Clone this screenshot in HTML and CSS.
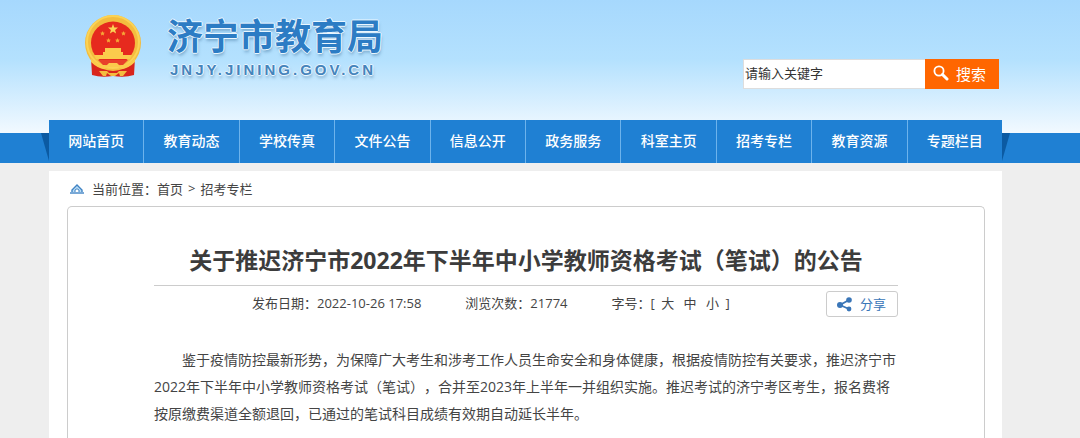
FILE: index.html
```html
<!DOCTYPE html>
<html lang="zh-CN">
<head>
    <meta charset="UTF-8">
    <meta name="viewport" content="width=device-width, initial-scale=1.0">
    <title>济宁市教育局</title>
    <link rel="stylesheet" href="styles.css">
</head>
<body>

    <header class="header">
        <div class="container header-inner">
            <a class="logo" href="#">
                <svg class="emblem" viewBox="0 0 58 62" aria-hidden="true">
                    <path d="M7 43 L8 60 Q17 63 29 61 Q41 63 50 60 L51 43 Z" fill="#d9251c"/>
                    <ellipse cx="29" cy="28" rx="28" ry="28" fill="#f3bd3f"/>
                    <circle cx="29" cy="27" r="26" fill="none" stroke="#fbd355" stroke-width="2"/>
                    <ellipse cx="29" cy="28" rx="22" ry="21.5" fill="#e62a1e"/>
                    <path d="M29 9 l1.3 3.5 3.7.1 -2.9 2.3 1 3.6 -3.1-2.1 -3.1 2.1 1-3.6 -2.9-2.3 3.7-.1z" fill="#fbd355"/>
                    <g fill="#f6a637">
                        <path id="star" d="M18.5 16 l.7 1.5 1.7.2 -1.2 1.1 .3 1.7 -1.5-.8 -1.5.8 .3-1.7 -1.2-1.1 1.7-.2z"/>
                        <use href="#star" x="21"/>
                        <use href="#star" x="6" y="7"/>
                        <use href="#star" x="15" y="7"/>
                    </g>
                    <path d="M21 33 h16 v4 h2 v3 h9 l-2 4 H12 l-2-4 h9 v-3 h2z" fill="#fbcb4c"/>
                    <path d="M14 45 h30 l-5 5 H19z" fill="#e8402a"/>
                    <path d="M7 43 Q12 49 22 51 L25 48 h8 l3 3 Q46 49 51 43 L51 47 Q45 53 38 54 L33 52 h-8 L20 54 Q13 53 7 47z" fill="#fbcb4c"/>
                    <path d="M15 56 h8 l2 2 h8 l2-2 h8 l-4 5 h-3 l-1-3 -4 3 h-4 l-4-3 -1 3 h-3z" fill="#f3bd3f"/>
                </svg>
                <span class="logo-text">
                    <span class="logo-name">济宁市教育局</span>
                    <span class="logo-domain">JNJY.JINING.GOV.CN</span>
                </span>
            </a>
            <form class="search">
                <input class="search-input" type="text" placeholder="请输入关键字" aria-label="请输入关键字">
                <button class="search-button" type="submit">
                    <svg class="search-icon" viewBox="0 0 16 16" aria-hidden="true">
                        <circle cx="6" cy="6" r="4.6" fill="none" stroke="#fff" stroke-width="1.8"/>
                        <path d="M9.5 9.5 L14 14" stroke="#fff" stroke-width="3" stroke-linecap="round"/>
                    </svg>
                    搜索
                </button>
            </form>
        </div>
    </header>

    <div class="nav-bar">
        <nav class="container nav">
            <a href="#">网站首页</a>
            <a href="#">教育动态</a>
            <a href="#">学校传真</a>
            <a href="#">文件公告</a>
            <a href="#">信息公开</a>
            <a href="#">政务服务</a>
            <a href="#">科室主页</a>
            <a href="#">招考专栏</a>
            <a href="#">教育资源</a>
            <a href="#">专题栏目</a>
        </nav>
    </div>

    <main class="container main">
        <div class="breadcrumb">
            <svg class="home-icon" viewBox="0 0 14 10" aria-hidden="true">
                <path d="M2 8 V6 L7 1 L12 6 V8" fill="#b9dcf5" stroke="#3f83c4" stroke-width="1.4"/>
                <path d="M5 8 V6 Q7 3.5 9 6 V8" fill="#fff" stroke="#3f83c4"/>
                <path d="M0 9 H14" stroke="#3f83c4" stroke-width="1.4"/>
            </svg>
            <div class="crumbs">
                <span>当前位置：<a href="#">首页</a></span>
                <span>&gt;</span>
                <a href="#">招考专栏</a>
            </div>
        </div>

        <article class="article">
            <h1>关于推迟济宁市2022年下半年中小学教师资格考试（笔试）的公告</h1>
            <div class="meta">
                <div class="meta-info">
                    <span>发布日期：2022-10-26 17:58</span>
                    <span>浏览次数：21774</span>
                    <span class="font-size">字号：[ <a href="#">大</a> <a href="#">中</a> <a href="#">小</a> ]</span>
                </div>
                <button class="share" type="button">
                    <svg class="share-icon" viewBox="0 0 15 15" aria-hidden="true">
                        <path d="M12 3 L3 8 L12 12" fill="none" stroke="#3a76b8" stroke-width="1.8"/>
                        <circle cx="12" cy="3" r="2.8" fill="#3a76b8"/>
                        <circle cx="3" cy="8" r="3" fill="#3a76b8"/>
                        <circle cx="12" cy="12" r="2.4" fill="#3a76b8"/>
                    </svg>
                    分享
                </button>
            </div>
            <p>鉴于疫情防控最新形势，为保障广大考生和涉考工作人员生命安全和身体健康，根据疫情防控有关要求，推迟济宁市2022年下半年中小学教师资格考试（笔试），合并至2023年上半年一并组织实施。推迟考试的济宁考区考生，报名费将按原缴费渠道全额退回，已通过的笔试科目成绩有效期自动延长半年。</p>
        </article>
    </main>

</body>
</html>
```
FILE: styles.css
```css
* {
    box-sizing: border-box;
}

body {
    display: flex;
    flex-direction: column;
    min-height: 100vh;
    margin: 0;
    background: #eee;
    color: #444;
    font-family: "Open Sans", "Noto Sans CJK SC", sans-serif;
    font-size: 13px;
    text-spacing-trim: space-all;
}

a {
    color: inherit;
    text-decoration: none;
}

.container {
    margin: 0 78px 0 49px;
}

/* Header */
.header {
    height: 133px;
    background: linear-gradient(#a6d8fd, #b4e1fe 45%, #f2f9ff);
}

.header-inner {
    display: flex;
    justify-content: space-between;
    align-items: flex-start;
    padding: 15px 3px 0 35px;
}

.logo {
    display: flex;
    gap: 25px;
}

.emblem {
    width: 58px;
    height: 62px;
}

.logo-text {
    display: flex;
    flex-direction: column;
    color: #2c7cc4;
    font-weight: bold;
    text-shadow: 1px 0 #e9f6ff, -1px 0 #e9f6ff, 0 1px #e9f6ff, 0 -1px #e9f6ff, 1px 3px 3px rgba(80, 130, 170, 0.5);
}

.logo-name {
    font-size: 36px;
    line-height: 44px;
}

.logo-domain {
    padding-left: 3px;
    color: #4584bb;
    font-family: "Liberation Sans", sans-serif;
    font-size: 15px;
    line-height: 22px;
    letter-spacing: 3px;
}

.search {
    display: flex;
    margin-top: 44px;
}

.search-input {
    width: 182px;
    height: 30px;
    padding: 0 1px 2px;
    border: 1px solid #ddd;
    border-right: 0;
    border-radius: 0;
    background: #fff;
    font: inherit;
}

.search-input::placeholder {
    color: #333;
}

.search-button {
    display: flex;
    align-items: center;
    gap: 7px;
    width: 74px;
    height: 30px;
    padding: 0 8px 2px;
    border: 0;
    background: #f60;
    color: #fff;
    font-family: inherit;
    font-size: 15px;
    white-space: nowrap;
    cursor: pointer;
}

.search-icon {
    flex: none;
    width: 16px;
    height: 16px;
}

/* Navigation */
.nav-bar {
    height: 30px;
    background: #1f80d3;
}

.nav {
    position: relative;
    display: flex;
    top: -13px;
    height: 43px;
    background: #1f80d3;
}

/* folded corners on both sides */
.nav::before,
.nav::after {
    content: '';
    position: absolute;
    top: 13px;
    width: 8px;
    height: 28px;
    background: #0b5aa2;
}

.nav::before {
    right: 100%;
    clip-path: polygon(0 0, 100% 0, 100% 100%);
}

.nav::after {
    left: 100%;
    clip-path: polygon(0 0, 100% 0, 0 100%);
}

.nav a {
    flex: 1;
    color: #fff;
    font-size: 14px;
    font-weight: 500;
    line-height: 42px;
    text-align: center;
}

.nav a + a {
    border-left: 1px solid #6db3ec;
}

/* Content */
.main {
    display: flex;
    flex: 1;
    flex-direction: column;
    margin-top: 8px;
    padding: 0 17px 0 18px;
    background: #fff;
}

.breadcrumb {
    display: flex;
    align-items: center;
    gap: 8px;
    height: 35px;
    padding-left: 3px;
}

.home-icon {
    width: 14px;
    height: 10px;
}

.crumbs {
    display: flex;
    gap: 5px;
}

.article {
    flex: 1;
    padding: 35px 86px 0;
    border: 1px solid #ccc;
    border-bottom: 0;
    border-radius: 5px 5px 0 0;
}

h1 {
    margin: 0;
    padding-bottom: 7px;
    border-bottom: 1px solid #ccc;
    color: #3c3c3c;
    font-size: 23px;
    line-height: 36px;
    text-align: center;
}

.meta {
    display: flex;
    justify-content: space-between;
    align-items: center;
    height: 36px;
}

.meta-info {
    display: flex;
    gap: 44px;
    padding: 0 0 3px 98px;
}

.font-size a {
    margin: 0 3px;
}

.share {
    display: flex;
    align-items: center;
    gap: 8px;
    width: 72px;
    height: 26px;
    padding: 0 10px;
    border: 1px solid #ccc;
    border-radius: 3px;
    background: #fff;
    color: #3a76b8;
    font-family: inherit;
    font-size: 13px;
    line-height: 18px;
    white-space: nowrap;
    cursor: pointer;
}

.share-icon {
    flex: none;
    width: 15px;
    height: 15px;
}

.article p {
    margin: 24px 0 0;
    font-size: 14px;
    line-height: 27px;
    text-indent: 2em;
}
```
